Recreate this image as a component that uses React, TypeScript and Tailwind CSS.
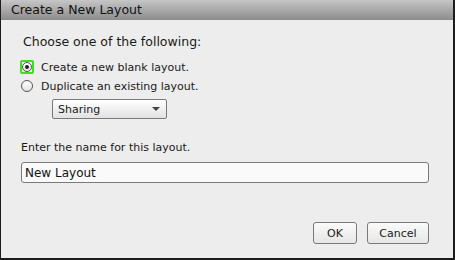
import { useState } from "react";

export default function App() {
  const [choice, setChoice] = useState<"blank" | "duplicate">("blank");
  const [name, setName] = useState("New Layout");

  return (
    <div className="flex h-[260px] w-[455px] flex-col border-b-2 border-l border-r-2 border-[#1c1c1c] bg-[#ededed] font-['DejaVu_Sans',sans-serif] text-[#1a1a1a]">
      <div className="flex h-[20px] shrink-0 items-center bg-gradient-to-b from-[#c6c6c6] to-[#8c8c8c] pl-[10px] text-[12.5px] leading-none text-[#111]">
        Create a New Layout
      </div>

      <div className="flex flex-1 flex-col">
        <div className="ml-[22px] mt-[14px] text-[12.5px] leading-[16px]">Choose one of the following:</div>

        <label className="ml-[19px] mt-[10px] flex h-[14px] items-center gap-[7px] text-[11px] leading-none">
          <Radio checked={choice === "blank"} focused onClick={() => setChoice("blank")} />
          Create a new blank layout.
        </label>

        <label className="ml-[19px] mt-[5px] flex h-[14px] items-center gap-[7px] text-[11px] leading-none">
          <Radio checked={choice === "duplicate"} onClick={() => setChoice("duplicate")} />
          Duplicate an existing layout.
        </label>

        <div className="ml-[51px] mt-[6px] flex h-[20px] w-[115px] items-center justify-between rounded-[2px] border border-[#7a7a7a] bg-gradient-to-b from-white to-[#e2e2e2] pl-[5px] pr-[6px] text-[11px] leading-none">
          <span>Sharing</span>
          <span className="h-0 w-0 border-x-[4px] border-t-[4px] border-x-transparent border-t-[#444]" />
        </div>

        <div className="ml-[20px] mt-[22px] text-[11px] leading-[14px]">Enter the name for this layout.</div>

        <input
          value={name}
          onChange={e => setName(e.target.value)}
          className="ml-[20px] mt-[7px] h-[21px] w-[408px] rounded-[3px] border border-[#7a7a7a] bg-[#fafafa] pl-[3px] text-[12px] leading-none text-[#111] outline-none"
        />

        <div className="mr-[24px] mt-[39px] flex justify-end gap-[10px]">
          <button className="h-[22px] w-[44px] rounded-[3px] border border-[#7a7a7a] bg-gradient-to-b from-[#fbfbfb] to-[#e6e6e6] text-[11px] leading-none">
            OK
          </button>
          <button className="h-[22px] w-[62px] rounded-[3px] border border-[#7a7a7a] bg-gradient-to-b from-[#fbfbfb] to-[#e6e6e6] text-[11px] leading-none">
            Cancel
          </button>
        </div>
      </div>
    </div>
  );
}

function Radio({ checked, focused, onClick }: { checked: boolean; focused?: boolean; onClick: () => void }) {
  return (
    <span
      onClick={onClick}
      className={
        focused
          ? "flex h-[14px] w-[14px] shrink-0 items-center justify-center rounded-[2px] border-2 border-[#3ee01e]"
          : "flex h-[14px] w-[14px] shrink-0 items-center justify-center"
      }
    >
      <span
        className={
          focused
            ? "flex h-[10px] w-[10px] items-center justify-center rounded-full border border-[#555] bg-gradient-to-b from-white to-[#e4e4e4]"
            : "flex h-[12px] w-[12px] items-center justify-center rounded-full border border-[#555] bg-gradient-to-b from-white to-[#e4e4e4]"
        }
      >
        {checked && <span className="h-[4px] w-[4px] rounded-full bg-[#222]" />}
      </span>
    </span>
  );
}
